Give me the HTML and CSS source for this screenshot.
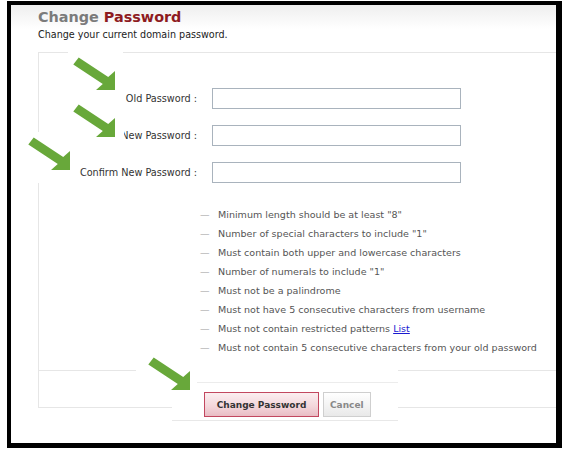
FILE: index.html
```html
<!DOCTYPE html>
<html lang="en">
<head>
    <meta charset="UTF-8">
    <title>Change Password</title>
    <link rel="stylesheet" href="styles.css">
</head>
<body>

<div class="frame">
    <header class="page-head">
        <h1><span class="muted">Change</span> <span class="accent">Password</span></h1>
        <p class="sub">Change your current domain password.</p>
    </header>

    <section class="panel">
        <form class="fields" id="pw-form">
            <div class="row">
                <label for="old-pw">Old Password :</label>
                <input type="password" id="old-pw">
            </div>
            <div class="row">
                <label for="new-pw">New Password :</label>
                <input type="password" id="new-pw">
            </div>
            <div class="row">
                <label for="confirm-pw">Confirm New Password :</label>
                <input type="password" id="confirm-pw">
            </div>
        </form>

        <ul class="rules">
            <li>Minimum length should be at least "8"</li>
            <li>Number of special characters to include "1"</li>
            <li>Must contain both upper and lowercase characters</li>
            <li>Number of numerals to include "1"</li>
            <li>Must not be a palindrome</li>
            <li>Must not have 5 consecutive characters from username</li>
            <li>Must not contain restricted patterns&nbsp;<a href="#">List</a></li>
            <li>Must not contain 5 consecutive characters from your old password</li>
        </ul>

        <div class="panel-foot"></div>
    </section>

    <div class="actions">
        <div class="btn-row">
            <button type="submit" form="pw-form" class="btn btn-primary">Change Password</button>
            <button type="button" class="btn">Cancel</button>
        </div>
    </div>

    <!-- annotation arrows pasted over the screenshot -->
    <div class="arrow a1"><svg viewBox="0 0 44 34"><polygon points="6.7,0.4 36.2,19.9 43,14 43,33 24,33 30.8,27.1 1.3,7.6"/></svg></div>
    <div class="arrow a2"><svg viewBox="0 0 44 34"><polygon points="6.7,0.4 36.2,19.9 43,14 43,33 24,33 30.8,27.1 1.3,7.6"/></svg></div>
    <div class="arrow a3"><svg viewBox="0 0 44 34"><polygon points="6.7,0.4 36.2,19.9 43,14 43,33 24,33 30.8,27.1 1.3,7.6"/></svg></div>
    <div class="arrow a4"><svg viewBox="0 0 44 34"><polygon points="6.7,0.4 36.2,19.9 43,14 43,33 24,33 30.8,27.1 1.3,7.6"/></svg></div>
</div>

</body>
</html>
```

FILE: styles.css
```css
body {
    margin: 0;
    background: #fff;
    font-family: "DejaVu Sans", Verdana, sans-serif;
    color: #333;
}
.frame {
    position: relative;
    margin: 1px 0 0 7px;
    width: 545px;
    height: 438px;
    border: solid #000;
    border-width: 4px 6px 5px 4px;
    background: #fff;
    overflow: hidden;
}
.page-head {
    box-sizing: border-box;
    height: 47px;
    padding: 3px 0 0 27px;
    background: linear-gradient(#eeeeee, #ffffff 24px);
}
.page-head h1 {
    margin: 0;
    font-size: 14.4px;
    line-height: 18px;
    font-weight: bold;
}
.muted {
    color: #7b7b7b;
}
.accent {
    color: #8e1b1f;
}
.sub {
    margin: 3px 0 0;
    font-size: 9.6px;
    line-height: 12px;
    color: #222;
}
.panel {
    margin-left: 27px;
    border: 1px solid #e6e6e6;
    border-right: none;
}
.fields {
    display: flex;
    flex-direction: column;
    gap: 16px;
    padding-top: 35px;
    margin: 0;
}
.row {
    display: flex;
    align-items: center;
}
.row label {
    width: 158px;
    text-align: right;
    font-size: 9.7px;
    color: #333;
}
.row input {
    box-sizing: border-box;
    margin: 0 0 0 15px;
    width: 249px;
    height: 21px;
    border: 1px solid #a9b3bd;
    padding: 2px 4px;
}
.rules {
    list-style: none;
    margin: 22px 0 0;
    padding: 0 0 0 161px;
}
.rules li {
    display: flex;
    font-size: 9.55px;
    line-height: 19px;
    color: #555;
    white-space: nowrap;
}
.rules li::before {
    content: "\2014";
    width: 18px;
    flex: none;
    color: #999;
}
.rules a {
    color: #1a1ad0;
    text-decoration: underline;
}
.panel-foot {
    margin-top: 13px;
    height: 36px;
    border-top: 1px solid #e6e6e6;
}
.actions {
    position: relative;
    box-sizing: border-box;
    margin: -42px 0 0 161px;
    width: 226px;
    height: 55px;
    background: #fff;
    border-bottom: 1px solid #e8e8e8;
    padding-top: 16px;
}
.btn-row {
    display: flex;
    gap: 4px;
    margin-left: 25px;
    padding: 9px 0 0 7px;
    border-top: 1px solid #ececec;
}
.btn {
    height: 25px;
    padding: 0 6px;
    font-family: "DejaVu Sans", Verdana, sans-serif;
    font-size: 9px;
    font-weight: bold;
    color: #888;
    border: 1px solid #cfcfcf;
    background: linear-gradient(#ffffff, #e9e9e9);
}
.btn-primary {
    width: 115px;
    color: #333;
    border-color: #c2475f;
    background: linear-gradient(#fbeef0, #f3d5da 60%, #e9bcc4);
}
.arrow {
    position: absolute;
    box-sizing: border-box;
    background: #fff;
}
.arrow svg {
    display: block;
    width: 44px;
    height: 34px;
    fill: #68a83a;
}
.a1 {
    left: 57px;
    top: 45px;
    width: 55px;
    height: 45px;
    padding: 7px 0 0 4px;
}
.a2 {
    left: 57px;
    top: 93px;
    width: 56px;
    height: 42px;
    padding: 6px 0 0 4px;
}
.a3 {
    left: 14px;
    top: 127px;
    width: 53px;
    height: 51px;
    padding: 5px 0 0 2px;
}
.a4 {
    left: 125px;
    top: 350px;
    width: 60px;
    height: 43px;
    padding: 2px 0 0 11px;
}
```
